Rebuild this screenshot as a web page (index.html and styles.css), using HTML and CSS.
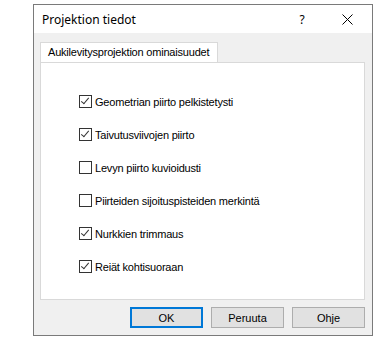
FILE: index.html
```html
<!DOCTYPE html>
<html lang="fi">
<head>
  <meta charset="UTF-8" />
  <title>Projektion tiedot</title>
  <link rel="stylesheet" href="styles.css">
</head>
<body>
  <div class="window">
    <div class="titlebar">
      <span class="title">Projektion tiedot</span>
      <span class="help">?</span>
      <span class="close">
        <svg width="11" height="11" viewBox="0 0 11 11">
          <path d="M0.5 0.5 L10.5 10.5 M10.5 0.5 L0.5 10.5" stroke="#000" stroke-width="1" fill="none" />
        </svg>
      </span>
    </div>

    <div class="content">
      <div class="tabs">
        <div class="tab">Aukilevitysprojektion ominaisuudet</div>
      </div>
      <div class="panel">
        <label class="check"><span class="box on"></span>Geometrian piirto pelkistetysti</label>
        <label class="check"><span class="box on"></span>Taivutusviivojen piirto</label>
        <label class="check"><span class="box"></span>Levyn piirto kuvioidusti</label>
        <label class="check"><span class="box"></span>Piirteiden sijoituspisteiden merkintä</label>
        <label class="check"><span class="box on"></span>Nurkkien trimmaus</label>
        <label class="check"><span class="box on"></span>Reiät kohtisuoraan</label>
      </div>
      <div class="buttons">
        <button class="default">OK</button>
        <button>Peruuta</button>
        <button>Ohje</button>
      </div>
    </div>
  </div>
</body>
</html>
```

FILE: styles.css
```css
body {
  margin: 0;
  background: #fff;
  font-family: "Liberation Sans", Arial, sans-serif;
  font-size: 11px;
  color: #000;
}

.window {
  margin: 4px 0 0 33px;
  width: 338px;
  height: 330px;
  border: 1px solid #7a7a7a;
  background: #f0f0f0;
}

.titlebar {
  height: 28px;
  background: #fff;
  display: flex;
  align-items: center;
  font-family: "Noto Sans", sans-serif;
  font-size: 12px;
}

.title {
  padding-left: 8px;
  flex: 1;
}

.help {
  width: 20px;
  margin-right: 12px;
  text-align: center;
}

.close {
  width: 46px;
  display: flex;
  justify-content: center;
  padding-right: 2px;
}

.content {
  padding: 9px 7px 0 6px;
}

.tabs {
  display: flex;
}

.tab {
  height: 19px;
  line-height: 19px;
  padding: 0 8px 0 7px;
  background: #fff;
  border: 1px solid #d9d9d9;
  border-bottom: none;
  letter-spacing: -0.2px;
}

.panel {
  height: 204px;
  background: #fff;
  border: 1px solid #d9d9d9;
  padding: 32px 0 0 38px;
  display: flex;
  flex-direction: column;
  gap: 20px;
}

.check {
  display: flex;
  align-items: center;
  height: 13px;
  letter-spacing: -0.2px;
}

.box {
  width: 11px;
  height: 11px;
  border: 1px solid #333;
  background: #fff;
  margin-right: 3px;
  position: relative;
}

.box.on::after {
  content: "";
  position: absolute;
  left: 3px;
  top: 0px;
  width: 3px;
  height: 7px;
  border: solid #333;
  border-width: 0 1px 1px 0;
  transform: rotate(40deg);
}

.buttons {
  display: flex;
  justify-content: flex-end;
  gap: 8px;
  margin-top: 7px;
}

button {
  width: 73px;
  height: 21px;
  border: 1px solid #adadad;
  background: #e1e1e1;
  font-family: "Liberation Sans", Arial, sans-serif;
  font-size: 11px;
  padding: 0;
  color: #000;
}

button.default {
  border: 2px solid #0078d7;
}
```
